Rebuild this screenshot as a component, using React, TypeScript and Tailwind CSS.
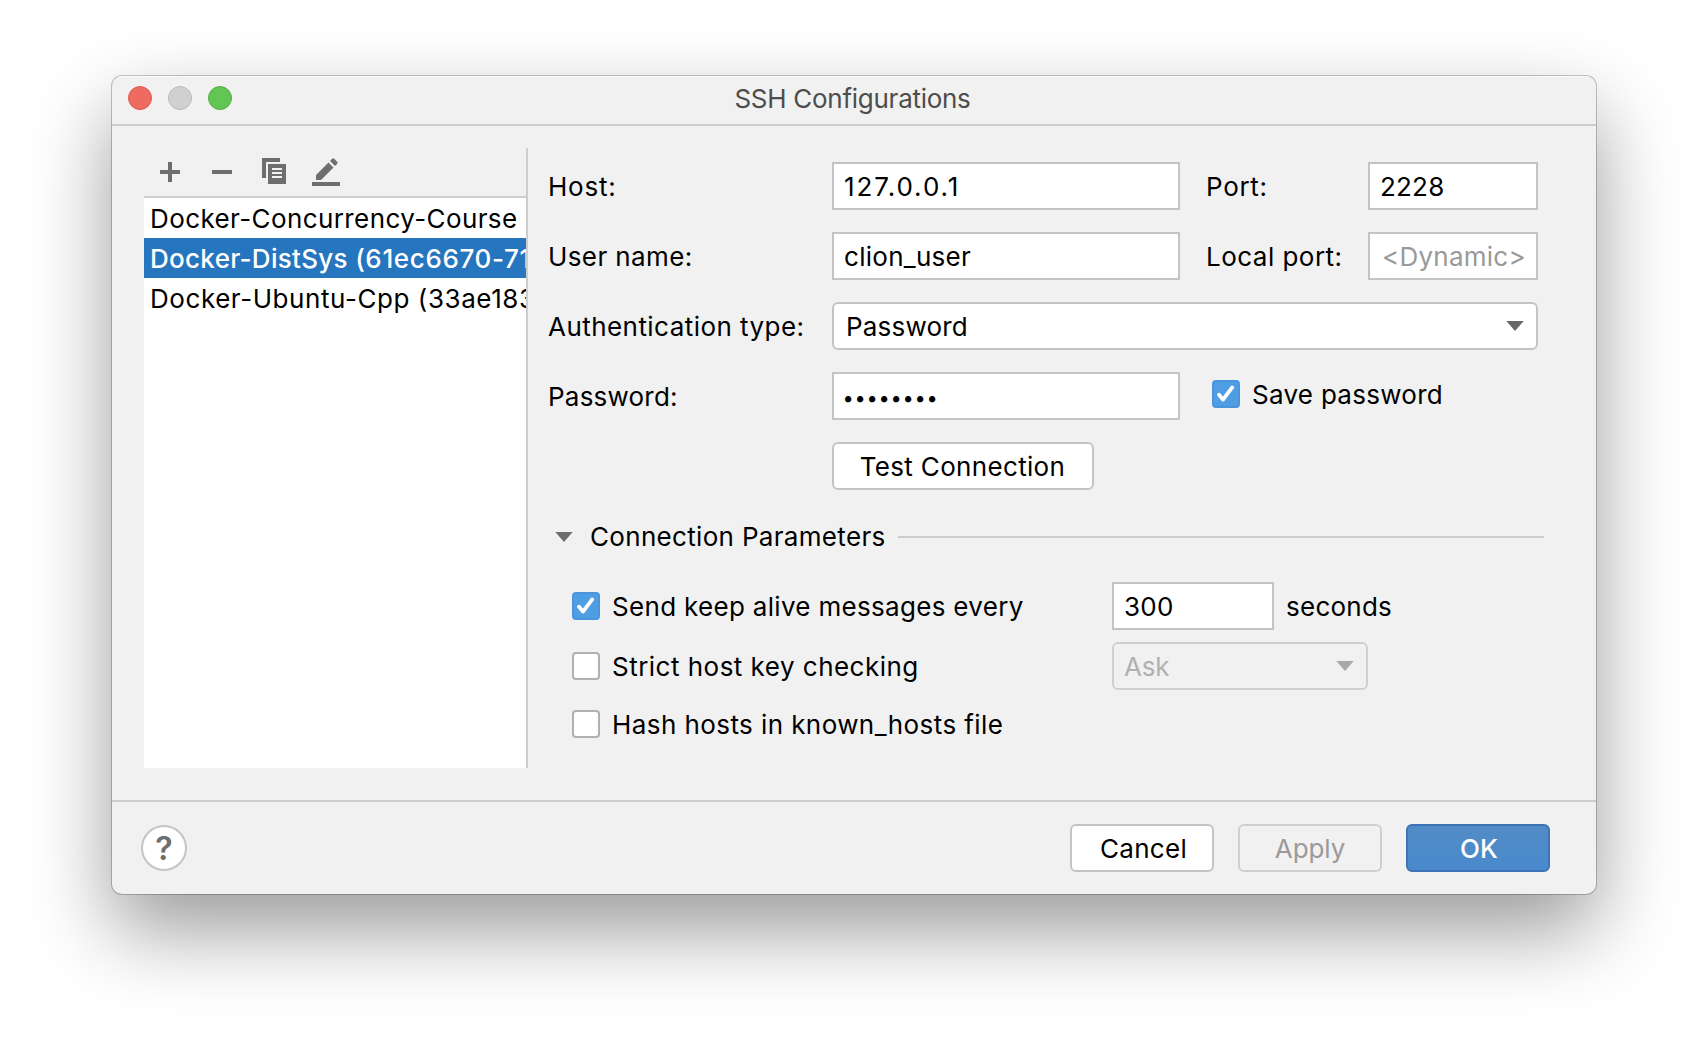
import React from "react";

function Triangle({ className = "" }: { className?: string }) {
  return (
    <svg className={`h-[10px] w-[18px] shrink-0 ${className}`} viewBox="0 0 18 10" fill="currentColor">
      <path d="M0.3 0H17.7L9 10Z" />
    </svg>
  );
}

function Checkbox({ checked = false }: { checked?: boolean }) {
  if (!checked) {
    return <span className="size-7 shrink-0 rounded-[4px] border-2 border-[#b0b0b0] bg-white" />;
  }
  return (
    <span className="flex size-7 shrink-0 items-center justify-center rounded-[4px] border-2 border-[#4a94dc] bg-[#4f9ee3]">
      <svg className="size-6 shrink-0" viewBox="0 0 24 24" fill="none" stroke="#fff" strokeWidth="3.8" strokeLinecap="round" strokeLinejoin="round">
        <path d="M5 12.8L9 17.6L18.2 5.4" />
      </svg>
    </span>
  );
}

function Field({ className = "", children }: { className?: string; children: React.ReactNode }) {
  return <div className={`flex h-12 items-center border-2 border-[#c4c4c4] bg-white pt-[2px] pl-[10px] ${className}`}>{children}</div>;
}

function Label({ className = "", children }: { className?: string; children: React.ReactNode }) {
  return <span className={`flex h-12 items-center pt-[2px] ${className}`}>{children}</span>;
}

function TitleBar() {
  return (
    <header className="grid h-[50px] shrink-0 grid-cols-[1fr_auto_1fr] items-center border-b-2 border-[#cdcdcd] pb-1 shadow-[inset_0_1px_0_#fafafa]">
      <div className="flex gap-4 pl-4">
        <span className="size-6 rounded-full border border-[#e0574b] bg-[#ed6b60]" />
        <span className="size-6 rounded-full border border-[#b9b9b9] bg-[#d0d0d0]" />
        <span className="size-6 rounded-full border border-[#53ae43] bg-[#62c654]" />
      </div>
      <h1 className="pt-[2px] pr-[3px] tracking-[-0.272px] text-[#4d4d4d]">SSH Configurations</h1>
    </header>
  );
}

function Toolbar() {
  return (
    <div className="flex h-12 items-center gap-5 pl-3 text-[#6e6e6e]">
      <svg className="size-8" viewBox="0 0 32 32" fill="currentColor">
        <path d="M12 6h4v8h8v4h-8v8h-4v-8H4v-4h8z" />
      </svg>
      <svg className="size-8" viewBox="0 0 32 32" fill="currentColor">
        <path d="M4 14h20v4H4z" />
      </svg>
      <svg className="size-8" viewBox="0 0 32 32" fill="currentColor">
        <path d="M2 2h18v4H6v16H2z" />
        <path fillRule="evenodd" d="M8 8h18v20H8zM12 12v2h10v-2zM12 16v2h10v-2zM12 20v2h10v-2z" />
      </svg>
      <svg className="size-8" viewBox="0 0 32 32" fill="currentColor">
        <path d="M0 26h28v4H0zM4 24v-5L16.5 6.5l5 5L9 24z" />
        <path d="M18 5l2.2-2.2q1-.9 2 0l3 3q.9 1 0 2L23 10z" />
      </svg>
    </div>
  );
}

function Sidebar() {
  return (
    <aside className="flex w-96 shrink-0 flex-col border-r-2 border-[#cdcdcd]">
      <Toolbar />
      <ul className="flex-1 overflow-hidden border-t-2 border-[#cdcdcd] bg-white whitespace-pre">
        <li className="h-10 overflow-hidden pl-[6px] leading-[42px] tracking-[0.401px]">Docker-Concurrency-Course</li>
        <li className="h-10 overflow-hidden bg-[#2675bf] pl-[6px] leading-[42px] font-medium tracking-[0.3px] text-white">
          Docker-DistSys <span className="tracking-[0.65px]">(61ec6670-71</span>
        </li>
        <li className="h-10 overflow-hidden pl-[6px] leading-[42px] tracking-[0.563px]">Docker-Ubuntu-Cpp (33ae183</li>
      </ul>
    </aside>
  );
}

function ConnectionForm() {
  return (
    <div className="grid grid-cols-[285px_348px_26px_162px_170px] gap-y-[22px]">
      <Label className="pl-[1px] tracking-[0.75px]">Host:</Label>
      <Field><span className="tracking-[1.93px]">127.0.0.1</span></Field>
      <span />
      <Label className="tracking-[0.7px]">Port:</Label>
      <Field><span className="tracking-[0.2px]">2228</span></Field>

      <Label className="pl-[1px] tracking-[0.4px]">User name:</Label>
      <Field><span className="tracking-[0.276px]">clion_user</span></Field>
      <span />
      <Label className="tracking-[0.47px]">Local port:</Label>
      <Field><span className="pl-[2px] tracking-[0.25px] text-[#999]">&lt;Dynamic&gt;</span></Field>

      <Label className="pl-[1px] tracking-[0.448px]">Authentication type:</Label>
      <div className="col-span-4 flex h-12 items-center justify-between rounded-[6px] border-2 border-[#c4c4c4] bg-white pr-3 pl-3">
        <span className="pt-[2px] tracking-[0.2px]">Password</span>
        <Triangle className="text-[#666]" />
      </div>

      <Label className="pl-[1px] tracking-[0.22px]">Password:</Label>
      <Field>
        <div className="-ml-[2px] flex">
          {Array.from({ length: 8 }, (_, i) => (
            <span key={i} className="flex w-3 justify-center pt-[1px] text-[20px] leading-none">•</span>
          ))}
        </div>
      </Field>
      <span />
      <div className="col-span-2 flex h-11 items-center gap-3 pl-[6px]">
        <Checkbox checked />
        <span className="pt-[2px] tracking-[0.28px]">Save password</span>
      </div>

      <span />
      <button className="h-12 w-[262px] rounded-[6px] border-2 border-[#c4c4c4] bg-white pt-[2px] pr-[1px] tracking-[0.33px]">Test Connection</button>
    </div>
  );
}

function ConnectionParameters() {
  return (
    <section className="flex flex-col">
      <div className="mt-[22px] flex h-12 items-center pl-2 tracking-[0.32px]">
        <Triangle className="mt-[2px] text-[#6e6e6e]" />
        <h2 className="ml-[17px] w-[308px] pt-[2px]">Connection Parameters</h2>
        <span className="mt-[2px] h-[2px] flex-1 bg-[#cdcdcd]" />
      </div>
      <div className="mt-[22px] flex h-12 items-center pl-[25px]">
        <div className="flex w-[540px] items-center gap-3">
          <Checkbox checked />
          <span className="pt-[2px] tracking-[0.312px]">Send keep alive messages every</span>
        </div>
        <Field className="w-[162px]"><span className="tracking-[0.269px]">300</span></Field>
        <span className="pt-[2px] pl-3 tracking-[0.249px]">seconds</span>
      </div>
      <div className="mt-3 flex h-12 items-center pl-[25px]">
        <div className="flex w-[540px] items-center gap-3">
          <Checkbox />
          <span className="pt-[2px] tracking-[0.48px]">Strict host key checking</span>
        </div>
        <div className="flex h-12 w-64 items-center justify-between rounded-[6px] border-2 border-[#d0d0d0] pr-3 pl-[10px] text-[#b0b0b0]">
          <span className="pt-[2px] tracking-[-0.2px]">Ask</span>
          <Triangle className="text-[#a9a9a9]" />
        </div>
      </div>
      <div className="mt-5 flex h-7 items-center gap-3 pl-[25px]">
        <Checkbox />
        <span className="pt-[2px] tracking-[0.42px]">Hash hosts in known_hosts file</span>
      </div>
    </section>
  );
}

function Footer() {
  return (
    <footer className="flex h-[94px] shrink-0 items-center border-t-2 border-[#cdcdcd] pr-[46px] pl-[29px]">
      <button className="flex size-[46px] items-center justify-center rounded-full border-2 border-[#c4c4c4] bg-white pt-[2px] text-[32px] leading-none font-semibold text-[#6e6e6e]">?</button>
      <div className="ml-auto flex gap-6">
        <button className="h-12 w-36 rounded-[6px] border-2 border-[#c4c4c4] bg-white pt-[2px] pl-[3px] tracking-[0.307px]">Cancel</button>
        <button className="h-12 w-36 rounded-[6px] border-2 border-[#d0d0d0] pt-[2px] tracking-[-0.1px] text-[#9a9a9a]">Apply</button>
        <button className="h-12 w-36 rounded-[6px] border-2 border-[#3e74b5] bg-linear-to-b from-[#528cc7] to-[#4989cc] pt-[2px] pl-[2px] font-medium text-white">OK</button>
      </div>
    </footer>
  );
}

export default function App() {
  return (
    <main className="flex h-[1042px] w-[1708px] overflow-hidden bg-white pt-[76px] pl-28 font-[Inter,sans-serif] text-[26px] leading-none text-black">
      <div className="flex h-[818px] w-[1484px] flex-col overflow-hidden rounded-[10px] bg-[#f1f1f1] shadow-[0_0_0_1px_rgba(0,0,0,0.22),0_36px_82px_rgba(0,0,0,0.4)]">
        <TitleBar />
        <div className="flex flex-1 pt-[22px] pb-8 pl-8">
          <Sidebar />
          <div className="w-[1016px] pt-[14px] pl-[19px]">
            <ConnectionForm />
            <ConnectionParameters />
          </div>
        </div>
        <Footer />
      </div>
    </main>
  );
}
